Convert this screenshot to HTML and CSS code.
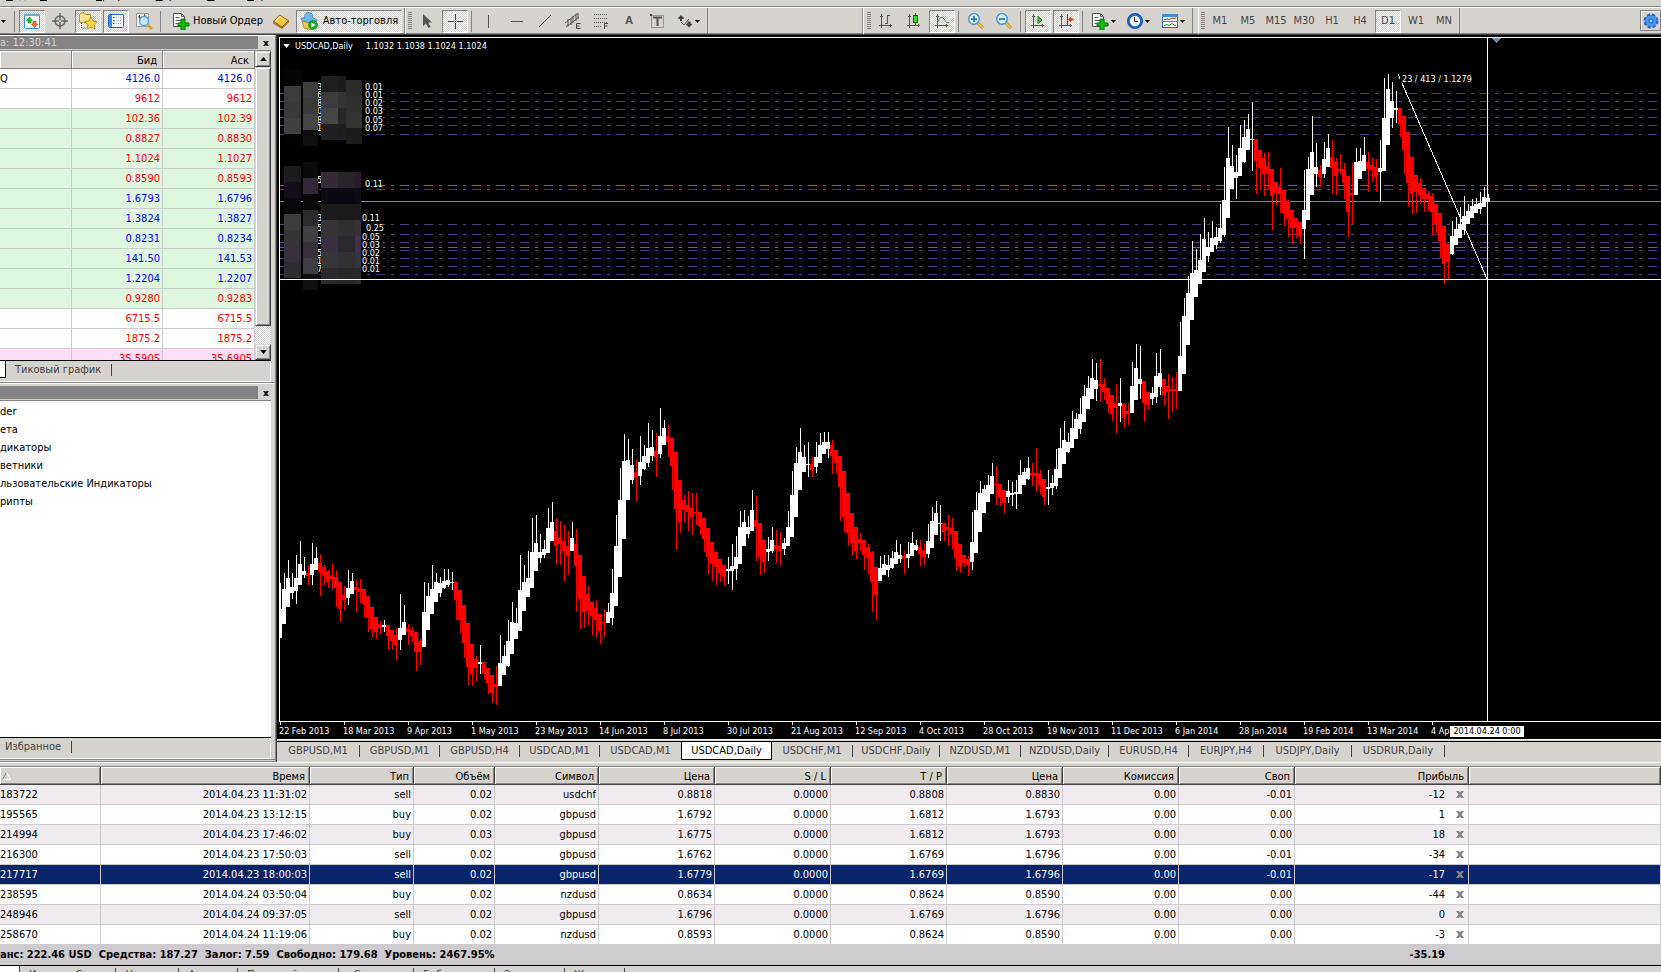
FILE: index.html
```html
<!DOCTYPE html>
<html lang="ru">
<head>
  <meta charset="UTF-8">
  <title>USDCAD,Daily</title>
  <meta name="viewport" content="width=device-width, initial-scale=1.0">
  <link rel="stylesheet" href="styles.css">
</head>
<body>
  <!-- shared icons -->
  <svg class="defs" aria-hidden="true">
    <symbol id="i-close" viewBox="0 0 8 7"><path d="M0 0h3l1 1.500 1-1.500h3L5.500 3.500 8 7H5L4 5.500 3 7H0l2.500-3.500z"/></symbol>
    <symbol id="i-down" viewBox="0 0 5 3"><path d="M0 0h5L2.500 3z"/></symbol>
    <symbol id="i-axes" viewBox="0 0 16 16"><path d="M3.500 1v14M1 12.500h13M2 3.500h3M12.500 11v3" fill="none" stroke="#555" /></symbol>
    <symbol id="i-page" viewBox="0 0 18 18">
      <path d="M1.500 1.500h8l3 3v10h-11z" fill="#fff" stroke="#555"/>
      <path d="M9.500 1.500v3h3M3.500 5.500h4M3.500 8.500h6M3.500 11.500h4" fill="none" stroke="#666"/>
      <path d="M9 7h4v4h4v3h-4v4H9v-4H6v-3h3z" fill="#10c010" stroke="#067006"/>
    </symbol>
  </svg>

  <nav class="menu">
    <a href="#"><u>В</u>ид</a>
    <a href="#"><u>В</u>ставка</a>
    <a href="#"><u>Г</u>рафики</a>
    <a href="#"><u>С</u>ервис</a>
    <a href="#"><u>О</u>кно</a>
    <a href="#"><u>С</u>правка</a>
  </nav>

  <header class="toolbar">
    <div class="group">
      <button class="tool narrow" aria-label="Профили"><svg class="caret"><use href="#i-down"/></svg></button>
      <span class="sep"></span>
      <button class="tool on" aria-label="Обзор рынка"><svg class="icon" viewBox="0 0 16 16"><rect x=".5" y="1.500" width="15" height="14" rx="1" fill="#fff" stroke="#3a8fd8"/><path d="M0 1h16v2H0z" fill="#5ab0ee"/><path d="M5.500 4l3 3.500H7V10H4V7.500H2.500z" fill="#2fc02f" stroke="#128012" stroke-width=".6"/><path d="M10.500 14.500l3-3.500H12V8.500H9V11H7.500z" fill="#ff7a30" stroke="#c02010" stroke-width=".6"/></svg></button>
      <button class="tool" aria-label="Окно данных"><svg class="icon" viewBox="0 0 16 16"><circle cx="8" cy="8" r="5" fill="none" stroke="#666" stroke-width="1.500"/><path d="M8 0v7M8 9v7M0 8h7M9 8h7" stroke="#666" stroke-width="1.500"/></svg></button>
      <button class="tool on" aria-label="Навигатор"><svg class="icon big" viewBox="0 0 18 18"><path d="M.5 2.500l1-1.500h4l1 1.500h5v8H.5z" fill="#fbe48a" stroke="#c09020"/><path d="M2.500 11v5h4" fill="none" stroke="#444" stroke-dasharray="1 1"/><path d="M12 5l2 4 4 .5-3 3 .8 4.500L12 15l-4 2 .8-4.500-3-3 4.200-.5z" fill="#ffd84a" stroke="#b07808" stroke-width=".8"/></svg></button>
      <button class="tool on" aria-label="Терминал"><svg class="icon" viewBox="0 0 16 16"><rect x=".5" y="1.500" width="15" height="13" rx="1" fill="#fff" stroke="#1c66c0"/><path d="M1 2h3v12H1z" fill="#3a8fe0"/><path d="M6 4.500h8M6 7.500h8M6 10.500h8" stroke="#9ab" stroke-dasharray="1 1"/><path d="M5 4.500h1M5 7.500h1M5 10.500h1" stroke="#c00"/></svg></button>
      <button class="tool" aria-label="Тестер стратегий"><svg class="icon big" viewBox="0 0 18 18"><path d="M1.500 1.500h12v13h-12z" fill="#f4f4f4" stroke="#999"/><path d="M4.500 3v8M3 5h1.500M9.500 2v5M9.500 4H11M4.500 8H6" stroke="#555" fill="none"/><circle cx="9" cy="9" r="4.500" fill="#bfe2fa" fill-opacity=".85" stroke="#5a9fd8" stroke-width="1.300"/><path d="M12.500 12.500l4.500 4.500" stroke="#d8a020" stroke-width="2.500"/></svg></button>
      <span class="sep"></span>
      <button class="tool order"><svg class="icon big"><use href="#i-page"/></svg>Новый Ордер</button>
      <button class="tool" aria-label="MetaEditor"><svg class="icon" viewBox="0 0 16 16"><path d="M.5 8.500L6.500 2l9 5.500L9 14z" fill="#f5c84a" stroke="#9a6408"/><path d="M.5 8.500v2L9 15.500V14zM9 14v1.500l6.500-6V7.500z" fill="#c88a18" stroke="#8a5806" stroke-width=".6"/><path d="M3 8l4-4.500 3 2" fill="none" stroke="#ffeaa0"/></svg></button>
      <button class="tool on auto"><svg class="icon big" viewBox="0 0 18 18"><path d="M2 9l2 7 6 1.500L15 14l1-5z" fill="#f2c83c" stroke="#a07810" stroke-width=".7"/><path d="M4.500 6C4 2 7-.5 10 1c3 .5 3 3 2.500 5 3 .5 4.500 1.500 4.500 3-5 2.500-13 1.500-16-1.500C1 6 3 5.500 4.500 6z" fill="#6db9e8" stroke="#2a78b0" stroke-width=".7"/><circle cx="13" cy="13" r="4.500" fill="#18b028" stroke="#0a7015" stroke-width=".6"/><path d="M11.500 10.500v5l4-2.500z" fill="#fff"/></svg>Авто-торговля</button>
    </div>

    <div class="group">
      <span class="grip"></span>
      <button class="tool" aria-label="Курсор"><svg class="icon" viewBox="0 0 16 16"><path d="M4 1v12l3-2.500L9.500 15l2-1-2.200-4.500H13z" fill="#555"/></svg></button>
      <button class="tool on" aria-label="Перекрестие"><svg class="icon" viewBox="0 0 16 16"><path d="M8.500 1v6M8.500 10v6M1 8.500h6M10 8.500h6M8 8.500h1" stroke="#444"/></svg></button>
      <span class="sep"></span>
      <button class="tool" aria-label="Вертикальная линия"><svg class="icon" viewBox="0 0 16 16"><path d="M7.500 2v13" stroke="#555"/></svg></button>
      <button class="tool" aria-label="Горизонтальная линия"><svg class="icon" viewBox="0 0 16 16"><path d="M2 8.500h12" stroke="#555"/></svg></button>
      <button class="tool" aria-label="Трендовая линия"><svg class="icon" viewBox="0 0 16 16"><path d="M2 14L14 2" stroke="#555"/></svg></button>
      <button class="tool" aria-label="Канал"><svg class="icon" viewBox="0 0 16 16"><path d="M0 10L13 0M1 14L14 4M3 6v7M6 5v7M8 3v7M11 1v7M13 0v6" stroke="#555" fill="none"/><path d="M15.500 10.500h-4v5h4M11.500 13h3" stroke="#444" fill="none"/></svg></button>
      <button class="tool" aria-label="Фибоначчи"><svg class="icon" viewBox="0 0 16 16"><path d="M1 1.500h14M1 5.500h14M1 9.500h14M1 13.500h8" stroke="#555" stroke-dasharray="1 1"/><path d="M11.500 16v-5.500H15M11.500 13h3" stroke="#444" fill="none"/></svg></button>
      <button class="tool letter" aria-label="Текст">A</button>
      <button class="tool" aria-label="Текстовая метка"><svg class="icon" viewBox="0 0 16 16"><rect x="2.500" y="2.500" width="12" height="12" fill="none" stroke="#555" stroke-dasharray="1 1"/><path d="M1 1h2v2H1z" fill="#444"/><path d="M4 4.500h9M8.500 4v9" stroke="#555" stroke-width="2"/></svg></button>
      <button class="tool wide" aria-label="Стрелки"><svg class="icon" viewBox="0 0 16 16"><path d="M4 2l3.500 3.500L5 6v2H3V6L.5 5.500zM12 14.500L8.500 11l2-.5v-2h3v2l2 .5z" fill="#444"/><path d="M4 9l3 3 5-6" fill="none" stroke="#555"/></svg><svg class="caret"><use href="#i-down"/></svg></button>
    </div>

    <div class="group charts">
      <span class="grip"></span>
      <button class="tool" aria-label="Бары"><svg class="icon" viewBox="0 0 16 16"><use href="#i-axes"/><path d="M9.500 2v9M9.500 2.500H12M7 10.500h2.500" stroke="#118a11" fill="none"/></svg></button>
      <button class="tool" aria-label="Свечи"><svg class="icon" viewBox="0 0 16 16"><use href="#i-axes"/><path d="M9.500 0v12" stroke="#067006"/><rect x="7.500" y="2.500" width="4" height="7" fill="#3ad63a" stroke="#067006"/></svg></button>
      <button class="tool on" aria-label="Линия"><svg class="icon" viewBox="0 0 16 16"><use href="#i-axes"/><path d="M3 11Q7 0 10 6t5 3" stroke="#2a9a2a" fill="none"/></svg></button>
      <span class="sep"></span>
      <button class="tool" aria-label="Увеличить"><svg class="icon" viewBox="0 0 16 16"><path d="M10 10l5 5" stroke="#b88610" stroke-width="3"/><path d="M10 10l5 5" stroke="#f2cf50" stroke-width="1.500"/><circle cx="6" cy="6" r="5.300" fill="#d6effc" stroke="#3f8fd0" stroke-width="1.300"/><path d="M3 6h6M6 3v6" stroke="#1a6ab8" stroke-width="1.600"/></svg></button>
      <button class="tool" aria-label="Уменьшить"><svg class="icon" viewBox="0 0 16 16"><path d="M10 10l5 5" stroke="#b88610" stroke-width="3"/><path d="M10 10l5 5" stroke="#f2cf50" stroke-width="1.500"/><circle cx="6" cy="6" r="5.300" fill="#d6effc" stroke="#3f8fd0" stroke-width="1.300"/><path d="M3 6h6" stroke="#1a6ab8" stroke-width="1.600"/></svg></button>
      <span class="sep"></span>
      <button class="tool on" aria-label="Автопрокрутка"><svg class="icon" viewBox="0 0 16 16"><use href="#i-axes"/><path d="M8 3.500v7L12 7z" fill="#3ad63a" stroke="#067006"/></svg></button>
      <button class="tool on" aria-label="Сдвиг графика"><svg class="icon" viewBox="0 0 16 16"><use href="#i-axes"/><path d="M9.500 1v11" stroke="#1a5a98"/><path d="M10 6.500l3-3V5.500h2.500v2H13v2z" fill="#d83808"/></svg></button>
      <span class="sep"></span>
      <button class="tool wide" aria-label="Индикаторы"><svg class="icon big"><use href="#i-page"/></svg><svg class="caret"><use href="#i-down"/></svg></button>
      <button class="tool wide" aria-label="Периоды"><svg class="icon" viewBox="0 0 16 16"><circle cx="8" cy="8" r="6.500" fill="#f2f6fa" stroke="#1a66c8" stroke-width="2.600"/><circle cx="8" cy="8" r="7.600" fill="none" stroke="#0c3f90" stroke-width=".6"/><path d="M7.500 4v4.500H11" fill="none" stroke="#333"/></svg><svg class="caret"><use href="#i-down"/></svg></button>
      <button class="tool wide" aria-label="Шаблоны"><svg class="icon" viewBox="0 0 16 16"><rect x=".5" y="1.500" width="15" height="13" fill="#fff" stroke="#2a70b8"/><path d="M0 1h16v3H0zM0 8h16v1H0z" fill="#3a8fd8"/><path d="M2 7l3-1 2 .5 3-1.500 2 .5 2-.5" fill="none" stroke="#a02010"/><path d="M2 12.500l3-1 2 1 3-2 2 1.500 2 .5" fill="none" stroke="#118a11"/></svg><svg class="caret"><use href="#i-down"/></svg></button>
    </div>

    <div class="group periods">
      <span class="grip"></span>
      <button class="tool">M1</button>
      <button class="tool">M5</button>
      <button class="tool">M15</button>
      <button class="tool">M30</button>
      <button class="tool">H1</button>
      <button class="tool">H4</button>
      <button class="tool on">D1</button>
      <button class="tool">W1</button>
      <button class="tool">MN</button>
    </div>

    <button class="gear" aria-label="Настройки"><svg class="icon" viewBox="0 0 16 16"><circle cx="8" cy="8" r="6.300" fill="#3f8cf0" stroke="#1f5fc8" stroke-width="2.400" stroke-dasharray="3 2"/><circle cx="8" cy="8" r="5.500" fill="#4a98f4"/><circle cx="8" cy="8" r="2" fill="#9cc8fa" stroke="#1f5fc8"/></svg></button>
  </header>

  <main class="workspace">
    <aside class="side">
      <section class="panel watch">
        <div class="panel-title"><span>а: 12:30:41</span><button aria-label="Закрыть"><svg><use href="#i-close"/></svg></button></div>
        <div class="watch-body">
          <div class="watch-list">
            <table>
              <colgroup><col class="c-name"><col class="c-bid"><col></colgroup>
              <thead><tr><th></th><th>Бид</th><th>Аск</th></tr></thead>
              <tbody>
                <tr class="up"><td>Q</td><td>4126.0</td><td>4126.0</td></tr>
                <tr class="down"><td></td><td>9612</td><td>9612</td></tr>
                <tr class="down fx"><td></td><td>102.36</td><td>102.39</td></tr>
                <tr class="down fx"><td></td><td>0.8827</td><td>0.8830</td></tr>
                <tr class="down fx"><td></td><td>1.1024</td><td>1.1027</td></tr>
                <tr class="down fx"><td></td><td>0.8590</td><td>0.8593</td></tr>
                <tr class="up fx"><td></td><td>1.6793</td><td>1.6796</td></tr>
                <tr class="up fx"><td></td><td>1.3824</td><td>1.3827</td></tr>
                <tr class="up fx"><td></td><td>0.8231</td><td>0.8234</td></tr>
                <tr class="up fx"><td></td><td>141.50</td><td>141.53</td></tr>
                <tr class="up fx"><td></td><td>1.2204</td><td>1.2207</td></tr>
                <tr class="down fx"><td></td><td>0.9280</td><td>0.9283</td></tr>
                <tr class="down"><td></td><td>6715.5</td><td>6715.5</td></tr>
                <tr class="down"><td></td><td>1875.2</td><td>1875.2</td></tr>
                <tr class="down rub"><td></td><td>35.5905</td><td>35.6905</td></tr>
              </tbody>
            </table>
          </div>
          <div class="scroll">
            <button aria-label="Вверх"><svg class="flip"><use href="#i-down"/></svg></button>
            <div class="thumb"></div>
            <button aria-label="Вниз"><svg><use href="#i-down"/></svg></button>
          </div>
        </div>
        <div class="panel-tabs"><span class="stub"></span><a href="#">Тиковый график</a></div>
      </section>

      <section class="panel navigator">
        <div class="panel-title"><span></span><button aria-label="Закрыть"><svg><use href="#i-close"/></svg></button></div>
        <ul class="tree">
          <li>der</li>
          <li>ета</li>
          <li>дикаторы</li>
          <li>ветники</li>
          <li>льзовательские Индикаторы</li>
          <li>рипты</li>
        </ul>
        <div class="panel-tabs fav"><a href="#">Избранное</a></div>
      </section>
    </aside>

    <section class="chart-area">
      <div class="chart">
        <div class="plot">
          <svg id="plot"></svg>
          <div class="chart-title"><svg><use href="#i-down"/></svg><span class="symbol">USDCAD,Daily</span><span>1.1032 1.1038 1.1024 1.1024</span></div>
        </div>
        <div class="axis">
          <ul>
            <li>22 Feb 2013</li><li>18 Mar 2013</li><li>9 Apr 2013</li><li>1 May 2013</li><li>23 May 2013</li><li>14 Jun 2013</li><li>8 Jul 2013</li><li>30 Jul 2013</li><li>21 Aug 2013</li><li>12 Sep 2013</li><li>4 Oct 2013</li><li>28 Oct 2013</li><li>19 Nov 2013</li><li>11 Dec 2013</li><li>6 Jan 2014</li><li>28 Jan 2014</li><li>19 Feb 2014</li><li>13 Mar 2014</li><li>4 Apr 2014</li>
          </ul>
          <span class="cross-date">2014.04.24 0:00</span>
        </div>
      </div>
      <nav class="chart-tabs">
        <a href="#">GBPUSD,M1</a>
        <a href="#">GBPUSD,M1</a>
        <a href="#">GBPUSD,H4</a>
        <a href="#">USDCAD,M1</a>
        <a href="#" class="before">USDCAD,M1</a>
        <a href="#" class="active">USDCAD,Daily</a>
        <a href="#">USDCHF,M1</a>
        <a href="#">USDCHF,Daily</a>
        <a href="#">NZDUSD,M1</a>
        <a href="#">NZDUSD,Daily</a>
        <a href="#">EURUSD,H4</a>
        <a href="#">EURJPY,H4</a>
        <a href="#">USDJPY,Daily</a>
        <a href="#">USDRUR,Daily</a>
      </nav>
    </section>
  </main>

  <section class="terminal">
    <table class="orders">
      <colgroup><col class="w101"><col class="w209"><col class="w104"><col class="w81"><col class="w104"><col class="w116"><col class="w116"><col class="w116"><col class="w116"><col class="w116"><col class="w116"><col class="w174"><col></colgroup>
      <thead>
        <tr><th><svg class="sort" viewBox="0 0 9 8"><path d="M.5 7.500L4.500.5" stroke="#848284" fill="none"/><path d="M4.500.5l4 7h-8" stroke="#fff" fill="none"/></svg></th><th>Время</th><th>Тип</th><th>Объём</th><th>Символ</th><th>Цена</th><th>S / L</th><th>T / P</th><th>Цена</th><th>Комиссия</th><th>Своп</th><th>Прибыль</th><th></th></tr>
      </thead>
      <tbody>
        <tr><td>183722</td><td>2014.04.23 11:31:02</td><td>sell</td><td>0.02</td><td>usdchf</td><td>0.8818</td><td>0.0000</td><td>0.8808</td><td>0.8830</td><td>0.00</td><td>-0.01</td><td>-12<button aria-label="Закрыть"><svg><use href="#i-close"/></svg></button></td><td></td></tr>
        <tr><td>195565</td><td>2014.04.23 13:12:15</td><td>buy</td><td>0.02</td><td>gbpusd</td><td>1.6792</td><td>0.0000</td><td>1.6812</td><td>1.6793</td><td>0.00</td><td>0.00</td><td>1<button aria-label="Закрыть"><svg><use href="#i-close"/></svg></button></td><td></td></tr>
        <tr><td>214994</td><td>2014.04.23 17:46:02</td><td>buy</td><td>0.03</td><td>gbpusd</td><td>1.6775</td><td>0.0000</td><td>1.6812</td><td>1.6793</td><td>0.00</td><td>0.00</td><td>18<button aria-label="Закрыть"><svg><use href="#i-close"/></svg></button></td><td></td></tr>
        <tr><td>216300</td><td>2014.04.23 17:50:03</td><td>sell</td><td>0.02</td><td>gbpusd</td><td>1.6762</td><td>0.0000</td><td>1.6769</td><td>1.6796</td><td>0.00</td><td>-0.01</td><td>-34<button aria-label="Закрыть"><svg><use href="#i-close"/></svg></button></td><td></td></tr>
        <tr class="selected"><td>217717</td><td>2014.04.23 18:00:03</td><td>sell</td><td>0.02</td><td>gbpusd</td><td>1.6779</td><td>0.0000</td><td>1.6769</td><td>1.6796</td><td>0.00</td><td>-0.01</td><td>-17<button aria-label="Закрыть"><svg><use href="#i-close"/></svg></button></td><td></td></tr>
        <tr><td>238595</td><td>2014.04.24 03:50:04</td><td>buy</td><td>0.02</td><td>nzdusd</td><td>0.8634</td><td>0.0000</td><td>0.8624</td><td>0.8590</td><td>0.00</td><td>0.00</td><td>-44<button aria-label="Закрыть"><svg><use href="#i-close"/></svg></button></td><td></td></tr>
        <tr><td>248946</td><td>2014.04.24 09:37:05</td><td>sell</td><td>0.02</td><td>gbpusd</td><td>1.6796</td><td>0.0000</td><td>1.6769</td><td>1.6796</td><td>0.00</td><td>0.00</td><td>0<button aria-label="Закрыть"><svg><use href="#i-close"/></svg></button></td><td></td></tr>
        <tr><td>258670</td><td>2014.04.24 11:19:06</td><td>buy</td><td>0.02</td><td>nzdusd</td><td>0.8593</td><td>0.0000</td><td>0.8624</td><td>0.8590</td><td>0.00</td><td>0.00</td><td>-3<button aria-label="Закрыть"><svg><use href="#i-close"/></svg></button></td><td></td></tr>
      </tbody>
      <tfoot>
        <tr><td colspan="11">анс: 222.46 USD&nbsp; Средства: 187.27&nbsp; Залог: 7.59&nbsp; Свободно: 179.68&nbsp; Уровень: 2467.95%</td><td>-35.19</td><td></td></tr>
      </tfoot>
    </table>
    <nav class="terminal-tabs">
      <a href="#" class="active">ля</a>
      <a href="#">История Счета</a>
      <a href="#">Новости</a>
      <a href="#">Алерты</a>
      <a href="#">Почтовый ящик</a>
      <a href="#">Сигналы</a>
      <a href="#">Библиотека</a>
      <a href="#">Эксперты</a>
      <a href="#">Журнал</a>
    </nav>
  </section>

  <script src="chart.js"></script>
</body>
</html>
```
FILE: styles.css
```css
* {
  box-sizing: border-box;
}
body {
  margin: 0;
  height: 100vh;
  display: flex;
  flex-direction: column;
  overflow: hidden;
  background: #d6d3ce;
  color: #000;
  font: 11px/14px "DejaVu Sans Condensed", "DejaVu Sans", sans-serif;
}
a {
  color: inherit;
  text-decoration: none;
}
ul {
  margin: 0;
  padding: 0;
  list-style: none;
}
button {
  font: inherit;
  color: inherit;
  padding: 0;
  border: 0;
  background: none;
}
table {
  border-collapse: separate;
  border-spacing: 0;
  table-layout: fixed;
}
th {
  font-weight: normal;
}
svg {
  flex: none;
}
.defs {
  display: none;
}

/* menu, scrolled almost out of the window */
.menu {
  flex: none;
  height: 7px;
  display: flex;
  align-items: flex-end;
  gap: 14px;
  padding: 0 6px 3px;
  overflow: hidden;
  border-bottom: 1px solid #848284;
}

/* toolbar */
.toolbar {
  flex: none;
  height: 28px;
  display: flex;
  border-top: 1px solid #fff;
  border-bottom: 1px solid #424142;
  box-shadow: inset 0 -1px #848284;
}
.group {
  display: flex;
  align-items: center;
  gap: 2px;
  padding: 0 2px 0 0;
  border-right: 1px solid #848284;
}
.group + .group {
  padding-left: 2px;
  border-left: 1px solid #fff;
}
.group.charts {
  margin-left: 155px;
  padding-left: 3px;
  box-shadow: -1px 0 #848284;
}
.group.periods {
  margin-left: 5px;
}
.grip {
  width: 4px;
  height: 18px;
  background: repeating-linear-gradient(#848284 0 1px, #d6d3ce 1px 2px);
}
.sep {
  width: 4px;
  height: 21px;
  border-left: 1px solid #d6d3ce;
  background: linear-gradient(to right, #848284 1px, transparent 1px);
}
.tool {
  flex: none;
  width: 26px;
  height: 23px;
  display: flex;
  align-items: center;
  justify-content: center;
  border: 1px solid transparent;
}
.tool.on {
  border-color: #848284 #fff #fff #848284;
  background: repeating-conic-gradient(#fff 0 25%, #d6d3ce 0 50%) 0 0 / 2px 2px;
}
.tool.narrow {
  width: 11px;
  padding-right: 4px;
}
.tool.wide {
  width: 33px;
  gap: 2px;
}
.tool.order {
  width: 101px;
  padding-left: 4px;
  gap: 3px;
}
.tool.auto {
  width: 106px;
  gap: 5px;
}
.tool.letter {
  color: #555;
  font-weight: bold;
}
.periods .tool {
  color: #444;
}
.icon {
  width: 16px;
  height: 16px;
}
.icon.big {
  width: 18px;
  height: 18px;
}
.caret {
  width: 5px;
  height: 3px;
}
.gear {
  width: 21px;
  height: 21px;
  margin: 2px 0 0 auto;
  display: flex;
  align-items: center;
  justify-content: center;
  border: 1px solid #848284;
  box-shadow: inset 1px 1px #fff;
}

/* left side */
.workspace {
  flex: 1;
  min-height: 0;
  display: flex;
}
.side {
  flex: none;
  width: 276px;
  display: flex;
  flex-direction: column;
  border-top: 1px solid #fff;
  border-bottom: 1px solid #848284;
  border-right: 1px solid #848284;
}
.panel {
  display: flex;
  flex-direction: column;
  padding-right: 4px;
  border-bottom: 1px solid #848284;
}
.panel-title {
  flex: none;
  height: 14px;
  display: flex;
  color: #d6d3ce;
}
.panel-title span {
  flex: 1;
  line-height: 13px;
  background: #848284;
  margin-bottom: 1px;
}
.panel-title button {
  width: 13px;
  padding-left: 3px;
  line-height: 0;
}
.panel-title svg {
  width: 6px;
  height: 5px;
}
.watch {
  height: 347px;
}
.watch-body {
  flex: 1;
  min-height: 0;
  display: flex;
  border-top: 1px solid #848284;
  border-bottom: 1px solid #000;
  background: #fff;
}
.watch-list {
  flex: 1;
  overflow: hidden;
}
.watch table {
  width: 100%;
}
.c-name {
  width: 72px;
}
.c-bid {
  width: 91px;
}
.watch th {
  height: 18px;
  padding: 3px 5px 0 0;
  line-height: 12px;
  text-align: right;
  background: #d6d3ce;
  border-right: 1px solid #848284;
  border-bottom: 1px solid #848284;
  box-shadow: inset 1px 1px #fff;
}
.watch td {
  height: 20px;
  padding: 0 2px 0 0;
  text-align: right;
  border-right: 1px solid #cecbce;
  border-bottom: 1px solid #cecbce;
}
.watch td:first-child {
  color: #000;
  text-align: left;
}
.up {
  color: #0000ff;
}
.down {
  color: #ff0000;
}
.fx {
  background: #def7de;
}
.rub {
  background: #ffdff7;
}
.scroll {
  width: 16px;
  display: flex;
  flex-direction: column;
  background: repeating-conic-gradient(#fff 0 25%, #d6d3ce 0 50%) 0 0 / 2px 2px;
}
.scroll button,
.thumb {
  height: 16px;
  background: #d6d3ce;
  border: 1px solid;
  border-color: #d6d3ce #424142 #424142 #d6d3ce;
  box-shadow: inset 1px 1px #fff, inset -1px -1px #848284;
  line-height: 0;
}
.scroll svg {
  width: 7px;
  height: 4px;
}
.scroll .flip {
  transform: rotate(180deg);
}
.thumb {
  flex: 1;
  margin-bottom: 18px;
}
.panel-tabs {
  flex: none;
  height: 21px;
  display: flex;
  align-items: center;
  padding-bottom: 2px;
  color: #424142;
  border-right: 1px solid #fff;
  border-bottom: 1px solid #fff;
}
.panel-tabs .stub {
  width: 6px;
  height: 17px;
  align-self: flex-start;
  background: #fff;
  border-right: 1px solid #000;
  border-bottom: 1px solid #000;
}
.panel-tabs a {
  padding: 0 10px 0 9px;
  line-height: 12px;
  border-right: 1px solid #424142;
}
.panel-tabs.fav a {
  padding-left: 5px;
}
.navigator {
  flex: 1;
  padding-top: 2px;
  margin-bottom: 1px;
  border-top: 1px solid #fff;
}
.tree {
  flex: 1;
  padding-top: 2px;
  background: #fff;
  border-top: 1px solid #848284;
  border-bottom: 1px solid #000;
}
.tree li {
  height: 18px;
  line-height: 18px;
}

/* chart */
.chart-area {
  flex: 1;
  min-width: 0;
  display: flex;
  flex-direction: column;
  border-left: 1px solid #424142;
}
.chart {
  flex: 1;
  min-height: 0;
  display: flex;
  flex-direction: column;
  padding: 2px 0 0 2px;
  background: #000;
  color: #fff;
  font-size: 9px;
  border-bottom: 1px solid #fff;
}
.plot {
  flex: 1;
  min-height: 0;
  position: relative;
  overflow: hidden;
  border: solid #fff;
  border-width: 1px 0 1px 1px;
}
#plot {
  display: block;
  width: 100%;
  height: 100%;
}
#plot text {
  fill: #fff;
}
.chart-title {
  position: absolute;
  top: 1px;
  left: 3px;
  display: flex;
  align-items: center;
  gap: 5px;
}
.chart-title svg {
  width: 7px;
  height: 4px;
  fill: #fff;
}
.chart-title .symbol {
  margin-right: 8px;
}
.axis {
  flex: none;
  height: 17px;
  position: relative;
  overflow: hidden;
}
.axis ul {
  display: flex;
}
.axis li {
  flex: none;
  width: 64px;
  padding-top: 3px;
  line-height: 13px;
  background: linear-gradient(#fff, #fff) 1px 0 / 1px 3px no-repeat;
}
.cross-date {
  position: absolute;
  top: 4px;
  left: 1171px;
  width: 74px;
  line-height: 11px;
  text-align: center;
  color: #000;
  background: #fff;
}
.chart-tabs {
  flex: none;
  height: 21px;
  display: grid;
  grid-template-columns: 83px 80px 80px 80px 81px 91px 81px 87px 81px 88px 80px 75px 88px 93px;
  color: #424142;
  border-top: 1px solid #000;
  margin-top: 1px;
}
.chart-tabs a {
  height: 12px;
  margin-top: 3px;
  line-height: 12px;
  text-align: center;
  border-right: 1px solid #424142;
}
.chart-tabs a.before {
  border: 0;
}
.chart-tabs a.active {
  height: 18px;
  margin-top: 0;
  line-height: 18px;
  color: #000;
  background: #fff;
  border: solid #000;
  border-width: 0 1px 1px;
}

/* terminal */
.terminal {
  flex: none;
  height: 210px;
  padding-top: 3px;
  overflow: hidden;
  border-top: 1px solid #fff;
}
.orders {
  width: 100%;
  background: #fff;
  border-top: 1px solid #848284;
}
.w81 {
  width: 81px;
}
.w101 {
  width: 101px;
}
.w104 {
  width: 104px;
}
.w116 {
  width: 116px;
}
.w174 {
  width: 174px;
}
.w209 {
  width: 209px;
}
.orders th {
  height: 18px;
  padding: 2px 4px 0 0;
  text-align: right;
  background: #d6d3ce;
  border-right: 1px solid #424142;
  border-bottom: 1px solid #424142;
  box-shadow: inset 1px 1px #fff, inset -1px -1px #848284;
}
.orders th:first-child {
  padding-left: 2px;
  text-align: left;
}
.orders td {
  height: 20px;
  padding: 0 2px 0 0;
  text-align: right;
  border-right: 1px solid #cecbce;
  border-bottom: 1px solid #cecbce;
}
.orders td:first-child {
  text-align: left;
}
.orders tbody tr:nth-child(odd) {
  background: #efebef;
}
.orders tbody tr.selected {
  background: #08246b;
  color: #fff;
}
.orders tbody button {
  width: 21px;
  padding-left: 8px;
  fill: #848284;
}
.orders td button svg {
  width: 8px;
  height: 7px;
}
.sort {
  width: 9px;
  height: 8px;
}
.orders tfoot td {
  font-weight: bold;
  background: #cecbce;
  border-color: #cecbce;
}
.orders tfoot td:nth-child(2) {
  padding-right: 23px;
}
.terminal-tabs {
  display: grid;
  grid-template-columns: 20px 96px 63px 59px 101px 75px 81px 70px 60px;
  color: #424142;
  border-top: 1px solid #000;
}
.terminal-tabs a {
  height: 14px;
  margin-top: 2px;
  text-align: center;
  border-right: 1px solid #424142;
}
.terminal-tabs a.active {
  height: 18px;
  margin-top: 0;
  padding-top: 2px;
  color: #000;
  background: #fff;
  text-align: left;
}
```
FILE: chart.js
```js
// one bar per item: direction, high, body top, body bottom, low (window pixels)
const bars = `
w583,609,638,638 w573,589,624,624 w560,578,607,607 w573,587,593,599 w555,578,591,604 w541,564,585,585
w557,571,575,578 r565,573,576,585 w543,564,575,585 w547,558,570,570 r554,563,572,596 r565,567,576,585
r570,571,582,588 r564,576,579,590 r570,577,588,607 r582,582,609,622 r586,595,600,610 w570,588,598,605
w573,581,594,594 r580,587,590,612 r579,588,592,603 r589,589,604,618 r596,596,618,632 r607,607,629,637
r617,617,632,639 r621,624,628,634 w620,625,627,632 r625,625,636,650 r630,630,641,650 r628,635,645,660
w594,628,640,650 w605,622,635,635 r624,628,632,645 r627,630,636,642 r632,632,652,671 r639,641,652,665
w582,612,647,647 w583,596,630,630 w565,589,614,614 w573,582,602,602 w577,583,593,597 w569,581,588,589
w569,580,585,587 w572,582,583,590 r582,582,600,620 r590,590,620,633 r605,605,643,658 r623,623,667,685
r644,644,674,686 r656,659,668,682 w645,662,664,674 r662,662,674,680 r668,668,683,694 r675,675,693,703
r666,684,687,705 w635,663,686,686 w645,656,675,675 w620,641,666,667 w602,622,654,654 w608,623,639,639
w555,590,631,631 w565,582,611,611 w551,578,597,597 w518,552,588,588 w515,543,571,571 w534,552,558,563
w540,549,555,558 w508,528,553,553 w502,522,541,541 r518,531,546,564 r521,538,544,565 r525,541,551,581
r531,546,556,575 w522,538,551,551 r529,544,566,612 r555,555,599,629 r576,576,612,628 r586,594,611,625
r602,602,616,635 r600,608,620,638 r614,614,631,644 r609,622,623,637 w603,612,623,623 w569,593,618,625
w515,546,606,606 w468,500,577,577 w434,461,539,539 w439,460,500,500 w449,465,480,484 r460,472,478,501
w436,462,476,485 w445,456,469,470 w423,448,463,467 w430,447,456,461 r433,451,457,477 w408,436,454,458
w420,428,445,445 r425,436,442,457 r438,438,466,490 r452,452,509,550 r480,480,522,533 r495,500,510,523
r491,505,512,531 r493,508,517,535 r493,512,513,525 r512,512,526,535 r518,518,539,552 r528,528,557,574
r542,542,564,581 r552,552,567,585 r559,559,573,582 r565,565,577,586 w557,569,571,584 w544,566,571,590
w536,557,569,580 w511,527,564,564 w510,522,546,546 w516,527,534,538 w490,510,531,531 r496,520,527,561
r523,523,557,575 r540,540,562,573 w537,549,552,561 w527,540,551,553 r530,545,549,563 r532,546,551,566
w538,543,549,555 w511,527,546,546 w471,495,537,537 w447,463,517,517 w428,452,490,490 w445,457,472,472
w442,464,465,477 r457,464,470,477 w442,457,467,473 w433,445,463,463 w432,442,454,454 w432,442,449,458
r440,445,456,474 r450,450,463,474 r456,456,487,521 r471,471,517,532 r493,493,533,546 r513,513,543,555
r527,527,551,559 r533,539,543,551 r540,540,555,570 r544,547,558,574 r551,552,582,612 r567,567,595,620
w556,568,581,581 w555,564,575,575 w555,565,570,577 w551,558,568,569 w540,552,564,564 w544,555,559,563
r551,556,559,574 w542,554,558,568 w532,543,556,556 w540,545,550,551 r540,547,554,566 r544,550,557,565
w524,541,554,558 w507,521,548,548 w501,513,535,535 w505,523,524,541 r523,523,532,541 r515,527,530,546
r518,528,534,549 r531,531,558,571 r544,544,567,573 r555,555,563,567 r556,559,565,576 w512,542,562,570
w492,510,553,553 w481,493,532,532 w485,489,513,513 w475,485,502,502 w463,476,494,494 r466,484,485,505
r484,484,497,506 r490,490,503,513 w480,491,497,503 w482,493,495,506 w480,492,494,509 w460,475,494,494
w468,472,485,485 w457,468,479,480 r463,473,475,486 r448,473,476,492 r470,474,485,494 r479,479,497,505
w470,487,489,505 w475,483,488,495 w449,469,486,489 w428,448,478,478 w421,440,464,464 w433,442,452,453
w411,428,448,448 w413,419,439,439 w398,414,429,434 w385,396,422,422 w376,388,409,409 w359,378,399,399
w363,380,389,401 r359,384,386,402 r378,384,392,400 r388,388,404,413 r395,395,414,421 r384,404,408,433
w378,403,406,422 r404,404,418,427 r403,411,414,425 w362,386,413,413 w344,368,400,400 w346,379,384,399
r381,381,403,422 r392,392,405,410 w387,393,399,405 w353,376,397,403 w349,373,387,395 r379,379,395,405
r374,386,392,419 r377,389,391,412 r372,389,391,409 w322,356,391,391 w298,316,374,374 w276,293,345,345
w241,273,320,320 w249,270,297,297 w234,260,284,284 w218,239,272,272 w232,247,256,262 w221,238,252,252
w227,237,245,249 w204,228,241,243 w167,200,235,237 w127,158,218,218 w145,166,189,189 w155,172,178,199
w125,148,176,176 w120,137,162,163 w114,129,150,150 w102,139,140,171 r139,139,161,194 r150,150,168,190
r153,158,174,196 r152,166,174,189 r169,169,196,230 r182,182,193,205 r168,187,194,213 r190,190,213,226
r200,201,219,237 r210,210,228,244 r218,218,228,238 r222,222,236,244 w170,210,229,259 w157,169,220,220
w116,152,195,195 w143,167,174,187 r165,170,177,187 w142,159,174,178 w134,148,167,167 r140,157,168,194
r158,162,176,195 r154,169,171,174 r163,169,183,199 r176,176,212,237 r163,193,195,224 w148,162,195,195
w148,161,179,179 w137,155,171,171 r152,162,169,192 r158,165,170,182 r159,167,177,192 w140,168,172,201
w78,118,171,171 w74,89,145,145 w82,101,118,128 w91,108,110,123 r108,108,124,137 r116,116,150,174
r132,132,183,207 r157,157,193,214 r175,175,192,213 r178,183,195,204 r188,188,199,212 r191,194,199,211
r193,196,212,236 r204,204,224,233 r213,213,241,258 r226,226,264,284 r244,244,262,279 w221,236,254,255
w217,229,245,245 w207,224,238,238 w196,216,230,235 w204,211,224,224 w199,206,218,218 w198,204,213,213
w192,203,209,214 w187,197,207,207 w194,198,202,202`.trim().split(/\s+/);

// blurred columns over the order labels: x, width, first y, colours of the 16px blocks
const blocks = [
  [284, 17, 70, '#050505 #3c3c3c #393939 #404040 #020204'],
  [284, 17, 166, '#1c1c1c #150d18 #08080a #3c3c3c #353535 #3a303c #2e2e30'],
  [303, 15, 82, '#3e3e3e #3a3a3a #464646 #101010'],
  [303, 15, 162, '#0a0a0a #33283a #08080a #2c2c2c #404044 #3a303c #3e3e42 #101012'],
  [321, 17, 76, '#202020 #3c3c3c #464646 #202022'],
  [338, 8, 76, '#1c1c1c #343434 #282828 #1e1e20'],
  [346, 16, 80, '#2b2b2b #303030 #333333 #1c1c1e'],
  [321, 17, 172, '#352a35 #0a0a12 #1a1a1a #343436 #383040 #363638 #2a2a2a'],
  [338, 17, 172, '#28242a #0a0a12 #1a1a1a #303032 #2c282e #323236 #282828'],
  [355, 6, 172, '#301830 #0c0c14 #1a1a1a #343434 #44304e #363640 #2a2a2a']
];

const labels = [
  [365, 87, '0.01'], [365, 95, '0.01'], [365, 103, '0.02'], [365, 111, '0.03'], [365, 120, '0.05'], [365, 128, '0.07'],
  [365, 184, '0.11'], [362, 218, '0.11'], [366, 228, '0.25'],
  [362, 237, '0.05'], [362, 245, '0.03'], [362, 253, '0.02'], [362, 261, '0.01'], [362, 269, '0.01'],
  [317, 87, '3'], [317, 95, '6'], [317, 103, '8'], [317, 111, '0'], [317, 120, '8'], [317, 128, '1'], [317, 180, '5'],
  [317, 218, '3'], [317, 228, '5'], [317, 241, '3'], [317, 253, '5'], [317, 261, '1'], [317, 269, '7']
];

const levels = [93, 101, 109, 117, 125, 134, 189, 224, 234, 242, 250, 258, 266, 274];
const stops = [185, 247];

function hline(y, color, dash) {
  return `<path d="M280 ${y + 0.5}H4000" stroke="${color}" ${dash ? 'stroke-dasharray="9 6 3 6"' : ''}/>`;
}

let out = '';
levels.forEach(y => out += hline(y, '#483d8b', true));
stops.forEach(y => out += hline(y, '#ff00ff', true));
out += hline(201, '#778899', false);

// labels sit on black
out += '<path d="M318 80h65v52h-65zM318 177h47v11h-47zM318 212h65v56h-65z" fill="#000"/>';
labels.forEach(([x, y, t]) => out += `<text x="${x}" y="${y + 3}">${t}</text>`);
blocks.forEach(([x, w, top, colors]) => {
  colors.split(' ').forEach((c, i) => {
    out += `<rect x="${x}" y="${top + i * 16}" width="${w}" height="16" fill="${c}"/>`;
  });
});

const path = { w: '', r: '' };
bars.forEach((bar, i) => {
  const [high, top, bottom, low] = bar.slice(1).split(',').map(Number);
  const x = 278 + i * 4;
  path[bar[0]] += `M${x} ${top}h4v${bottom - top}h-4zM${x + 2} ${high}h1v${low - high}h-1z`;
});
out += `<path d="${path.w}" fill="#fff"/><path d="${path.r}" fill="#f00"/>`;

// crosshair with the measuring line
out += hline(279, '#fff', false);
out += '<path d="M1487.5 38V800M1398 74L1487 279" stroke="#fff"/>';
out += '<path d="M1400 74h80v9h-80z" fill="#000"/><text x="1402" y="82">23 / 413 / 1.1279</text>';
out += '<path d="M1492 38h9l-4.500 5z" fill="#778899"/>';

document.getElementById('plot').innerHTML =
  `<g transform="translate(-280 -38)" shape-rendering="crispEdges">${out}</g>`;
```
